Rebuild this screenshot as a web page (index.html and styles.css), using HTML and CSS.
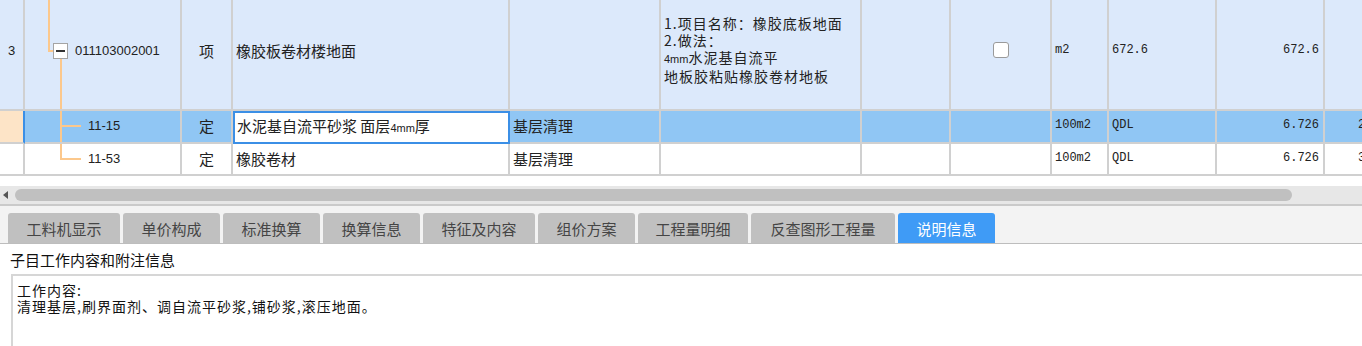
FILE: index.html
```html
<!DOCTYPE html>
<html lang="zh">
<head>
<meta charset="utf-8">
<title>说明信息</title>
<link rel="stylesheet" href="styles.css">
</head>
<body>
<div class="page">
  <div class="table">
    <div class="row r-item">
      <div class="cell c-num">3</div>
      <div class="cell c-code tree">
        <span class="ln ln-up"></span><span class="ln ln-uph"></span>
        <span class="toggle"><span class="minus"></span></span>
        <span class="ln ln-down"></span>
        <span class="code">011103002001</span>
      </div>
      <div class="cell c-center">项</div>
      <div class="cell">橡胶板卷材楼地面</div>
      <div class="cell"></div>
      <div class="cell c-desc"><div class="desc">1.项目名称：橡胶底板地面<br>2.做法：<br><span class="small">4mm</span>水泥基自流平<br>地板胶粘贴橡胶卷材地板</div></div>
      <div class="cell"></div>
      <div class="cell c-center"><span class="check"></span></div>
      <div class="cell mono">m2</div>
      <div class="cell mono">672.6</div>
      <div class="cell mono c-right">672.6</div>
      <div class="cell mono"></div>
    </div>
    <div class="row r-sel">
      <div class="cell c-num marker"></div>
      <div class="cell c-code tree sub">
        <span class="ln ln-vfull"></span><span class="ln ln-branch"></span>
        <span class="code">11-15</span>
      </div>
      <div class="cell c-center">定</div>
      <div class="cell edit"><span>水泥基自流平砂浆 面层<span class="small">4mm</span>厚</span></div>
      <div class="cell">基层清理</div>
      <div class="cell"></div>
      <div class="cell"></div>
      <div class="cell"></div>
      <div class="cell mono">100m2</div>
      <div class="cell mono">QDL</div>
      <div class="cell mono c-right">6.726</div>
      <div class="cell mono c-last">2</div>
    </div>
    <div class="row r-plain">
      <div class="cell c-num"></div>
      <div class="cell c-code tree sub">
        <span class="ln ln-vend"></span><span class="ln ln-branch"></span>
        <span class="code">11-53</span>
      </div>
      <div class="cell c-center">定</div>
      <div class="cell">橡胶卷材</div>
      <div class="cell">基层清理</div>
      <div class="cell"></div>
      <div class="cell"></div>
      <div class="cell"></div>
      <div class="cell mono">100m2</div>
      <div class="cell mono">QDL</div>
      <div class="cell mono c-right">6.726</div>
      <div class="cell mono c-last">3</div>
    </div>
  </div>

  <div class="hscroll">
    <span class="arrow"></span>
    <div class="thumb"></div>
  </div>

  <div class="tabs">
    <div class="tab w1">工料机显示</div>
    <div class="tab w2">单价构成</div>
    <div class="tab w2">标准换算</div>
    <div class="tab w2">换算信息</div>
    <div class="tab w1">特征及内容</div>
    <div class="tab w2">组价方案</div>
    <div class="tab w3">工程量明细</div>
    <div class="tab w4">反查图形工程量</div>
    <div class="tab w2 active">说明信息</div>
  </div>

  <div class="info">
    <div class="info-title">子目工作内容和附注信息</div>
    <div class="info-box">工作内容:<br>清理基层,刷界面剂、调自流平砂浆,铺砂浆,滚压地面。</div>
  </div>
</div>
</body>
</html>
```

FILE: styles.css
```css
html, body {
  margin: 0;
  padding: 0;
  background: #ffffff;
  overflow: hidden;
}
body {
  width: 1362px;
  height: 346px;
  font-family: "Noto Sans CJK SC", "Liberation Sans", sans-serif;
  color: #222;
}
.page {
  display: flex;
  flex-direction: column;
  width: 1362px;
  height: 346px;
  overflow: hidden;
}
.table {
  display: flex;
  flex-direction: column;
  width: 1362px;
  overflow: hidden;
}
.row {
  display: grid;
  grid-template-columns: 25px 157px 51px 277px 151px 201px 89px 101px 57px 108px 108px 160px;
  width: 1484px;
}
.cell {
  position: relative;
  box-sizing: border-box;
  border-right: 2px solid #d0d0d0;
  border-bottom: 2px solid #d0d0d0;
  display: flex;
  align-items: center;
  padding-left: 3px;
  font-size: 15px;
  line-height: 17px;
  white-space: nowrap;
  overflow: hidden;
}
.r-item { height: 111px; background: #dce9fb; }
.r-item .cell { padding-bottom: 9px; }
.r-sel { height: 33px; background: #90c6f4; }
.r-sel .cell, .r-plain .cell { padding-bottom: 2px; }
.r-plain { height: 32px; background: #ffffff; }

.c-num {
  justify-content: center;
  padding-left: 0;
  font-family: "Liberation Sans", sans-serif;
  font-size: 13px;
}
.marker {
  background: #fde4c7;
  border-right: 2px solid #3b8fe6;
}
.c-center { justify-content: center; padding-left: 0; }
.c-right { justify-content: flex-end; padding-right: 4px; }
.c-last { padding-left: 33px; }
.mono {
  font-family: "Liberation Mono", monospace;
  font-size: 12px;
  color: #222;
}
.desc {
  font-size: 14px;
  letter-spacing: 1px;
  line-height: 17px;
  white-space: nowrap;
}
.small {
  font-family: "Liberation Sans", sans-serif;
  font-size: 11px;
  letter-spacing: 0;
}
.edit {
  background: #ffffff;
  border: 2px solid #3b8fe6;
  padding-left: 2px;
}
.check {
  display: block;
  width: 16px;
  height: 16px;
  box-sizing: border-box;
  border: 1px solid #9a9a9a;
  border-radius: 3px;
  background: #ffffff;
}

/* tree */
.tree .code {
  font-family: "Liberation Sans", sans-serif;
  font-size: 13px;
  color: #222;
}
.r-item .tree .code { margin-left: 47px; }
.sub .code { margin-left: 60px; }
.ln {
  position: absolute;
  background: #fcc88c;
}
.ln-up { left: 23px; top: 0; width: 2px; height: 51px; }
.ln-uph { left: 23px; top: 50px; width: 6px; height: 2px; }
.ln-down { left: 35px; top: 59px; width: 2px; height: 52px; }
.ln-vfull { left: 35px; top: 0; width: 2px; height: 100%; }
.ln-vend { left: 35px; top: 0; width: 2px; height: 16px; }
.ln-branch { left: 35px; top: 14px; width: 21px; height: 2px; }
.toggle {
  position: absolute;
  left: 28px;
  top: 43px;
  width: 15px;
  height: 16px;
  box-sizing: border-box;
  border: 1px solid #a4a4a4;
  background: #ffffff;
  display: flex;
  align-items: center;
  justify-content: center;
}
.minus {
  display: block;
  width: 9px;
  height: 2px;
  background: #333;
}

/* scrollbar */
.hscroll {
  flex: none;
  margin-top: 10px;
  height: 18px;
  background: #e7e7e7;
  border-bottom: 2px solid #cacaca;
  display: flex;
  align-items: center;
}
.arrow {
  width: 0;
  height: 0;
  margin-left: 3px;
  border-top: 4px solid transparent;
  border-bottom: 4px solid transparent;
  border-right: 5px solid #555;
}
.thumb {
  margin-left: 7px;
  width: 1277px;
  height: 12px;
  border-radius: 6px;
  background: #c0c0c0;
}

/* tabs */
.tabs {
  flex: none;
  display: flex;
  align-items: flex-end;
  gap: 3px;
  height: 37px;
  padding-left: 8px;
  background: #f3f3f3;
  border-bottom: 1px solid #bdbdbd;
}
.tab {
  height: 30px;
  border-radius: 3px 3px 0 0;
  background: #c0c0c0;
  color: #454545;
  font-size: 15px;
  display: flex;
  align-items: center;
  justify-content: center;
}
.tab.w1 { width: 112px; }
.tab.w2 { width: 97px; }
.tab.w3 { width: 110px; }
.tab.w4 { width: 144px; }
.tab.active {
  background: #3f9bf6;
  color: #ffffff;
}

/* info */
.info {
  flex: 1;
  min-height: 0;
  display: flex;
  flex-direction: column;
}
.info-title {
  padding-left: 10px;
  margin-top: 7px;
  font-size: 15px;
  line-height: 18px;
  color: #111;
}
.info-box {
  flex: 1;
  margin-top: 5px;
  margin-left: 11px;
  border-top: 2px solid #d6d6d6;
  border-left: 2px solid #d6d6d6;
  padding: 6px 0 0 4px;
  font-size: 14px;
  letter-spacing: 1px;
  line-height: 16px;
  color: #111;
}
```
